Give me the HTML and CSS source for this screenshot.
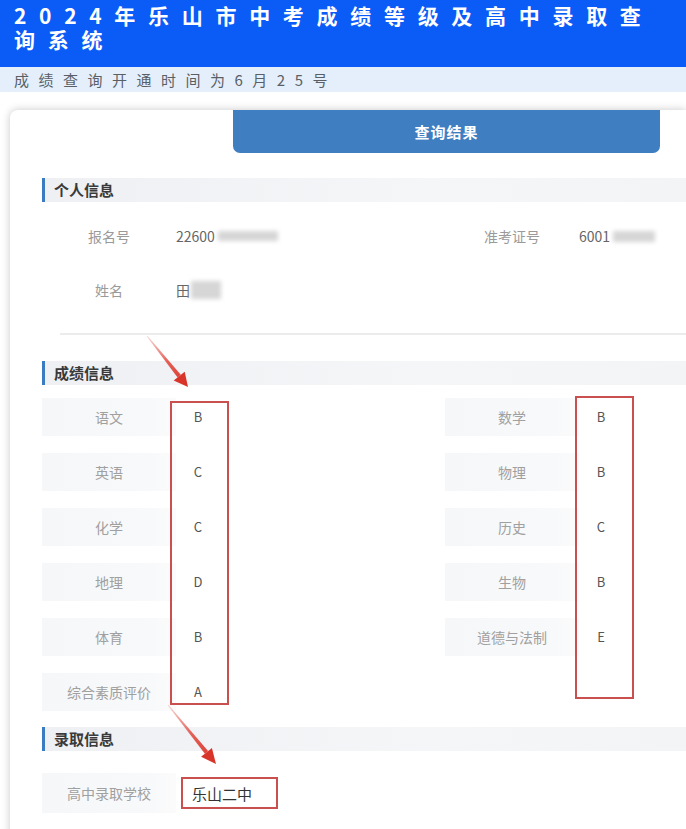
FILE: index.html
```html
<!DOCTYPE html>
<html lang="zh-CN">
<head>
    <meta charset="UTF-8">
    <meta name="viewport" content="width=device-width, initial-scale=1.0">
    <title>2024年乐山市中考成绩等级及高中录取查询系统</title>
    <link rel="stylesheet" href="styles.css">
</head>
<body>
    <div class="cabecera">
        <h1>2024年乐山市中考成绩等级及高中录取查<br>询系统</h1>
    </div>
    <div class="aviso">成绩查询开通时间为6月25号</div>

    <div class="tarjeta">
        <div class="pestana">查询结果</div>

        <div class="cuerpo">
            <h3 class="titulo">个人信息</h3>
            <div class="personal">
                <div class="fila">
                    <span class="etiqueta">报名号</span>
                    <span class="valor">22600<i class="oculto largo"></i></span>
                </div>
                <div class="fila">
                    <span class="etiqueta">准考证号</span>
                    <span class="valor">6001<i class="oculto corto"></i></span>
                </div>
                <div class="fila">
                    <span class="etiqueta">姓名</span>
                    <span class="valor">田<i class="oculto nombre"></i></span>
                </div>
            </div>
            <div class="separador"></div>

            <h3 class="titulo">成绩信息</h3>
            <div class="notas">
                <div class="nota"><span class="materia">语文</span><span class="letra">B</span></div>
                <div class="nota"><span class="materia">数学</span><span class="letra">B</span></div>
                <div class="nota"><span class="materia">英语</span><span class="letra">C</span></div>
                <div class="nota"><span class="materia">物理</span><span class="letra">B</span></div>
                <div class="nota"><span class="materia">化学</span><span class="letra">C</span></div>
                <div class="nota"><span class="materia">历史</span><span class="letra">C</span></div>
                <div class="nota"><span class="materia">地理</span><span class="letra">D</span></div>
                <div class="nota"><span class="materia">生物</span><span class="letra">B</span></div>
                <div class="nota"><span class="materia">体育</span><span class="letra">B</span></div>
                <div class="nota"><span class="materia">道德与法制</span><span class="letra">E</span></div>
                <div class="nota"><span class="materia">综合素质评价</span><span class="letra">A</span></div>

                <!-- marcas rojas hechas a mano encima de la captura -->
                <div class="marca marca-izq"></div>
                <div class="marca marca-der"></div>
            </div>

            <h3 class="titulo">录取信息</h3>
            <div class="admision">
                <span class="materia">高中录取学校</span>
                <span class="escuela">乐山二中</span>
            </div>
        </div>
    </div>

    <svg class="flechas" width="686" height="829" viewBox="0 0 686 829">
        <defs>
            <linearGradient id="cola1" x1="147" y1="336" x2="188" y2="387" gradientUnits="userSpaceOnUse">
                <stop offset="0" stop-color="#e0453a" stop-opacity="0.2"/>
                <stop offset="0.5" stop-color="#e0453a" stop-opacity="0.85"/>
                <stop offset="1" stop-color="#d9342a"/>
            </linearGradient>
            <linearGradient id="cola2" x1="168" y1="705" x2="216" y2="764" gradientUnits="userSpaceOnUse">
                <stop offset="0" stop-color="#e0453a" stop-opacity="0.2"/>
                <stop offset="0.5" stop-color="#e0453a" stop-opacity="0.85"/>
                <stop offset="1" stop-color="#d9342a"/>
            </linearGradient>
        </defs>
        <polygon points="146.6,336.3 147.4,335.7 180.8,374.8 177.6,377.4" fill="url(#cola1)"/>
        <polygon points="173.7,380.5 184.7,371.7 188,387" fill="#d9342a"/>
        <polygon points="167.6,705.3 168.4,704.7 208.1,751.1 204.9,753.7" fill="url(#cola2)"/>
        <polygon points="201.1,756.8 211.9,748.0 216,764" fill="#d9342a"/>
    </svg>
</body>
</html>
```

FILE: styles.css
```css
body {
    margin: 0;
    width: 686px;
    height: 829px;
    overflow: hidden;
    position: relative;
    background: #ffffff;
    font-family: "Noto Sans CJK SC", "Noto Sans", sans-serif;
    color: #555;
}

.cabecera {
    background-color: #0b5bf6;
    height: 67px;
    box-sizing: border-box;
    padding: 3px 14px 0 14px;
}

.cabecera h1 {
    margin: 0;
    color: #ffffff;
    font-size: 21px;
    line-height: 24px;
    font-weight: bold;
    letter-spacing: 12.7px;
    white-space: nowrap;
}

.aviso {
    background-color: #e4effb;
    height: 25px;
    line-height: 25px;
    padding-left: 14px;
    font-size: 15px;
    letter-spacing: 9.5px;
    color: #5a5f66;
}

.tarjeta {
    margin: 18px 0 0 10px;
    background: #ffffff;
    border-radius: 8px 0 0 0;
    box-shadow: 0 0 8px rgba(0, 0, 0, 0.22);
    height: 760px;
}

.pestana {
    margin-left: 223px;
    width: 427px;
    height: 43px;
    line-height: 43px;
    background-color: #3f7ec0;
    border-radius: 0 0 7px 7px;
    color: #ffffff;
    text-align: center;
    font-size: 15px;
    font-weight: bold;
    letter-spacing: 1px;
}

.cuerpo {
    padding-left: 32px;
}

.titulo {
    margin: 0;
    height: 24px;
    line-height: 24px;
    border-left: 3px solid #3a7bc1;
    padding-left: 9px;
    font-size: 15px;
    font-weight: bold;
    color: #3a3a3a;
    background: linear-gradient(90deg, #eef0f3, #f5f6f8 60%, #f3f4f6);
}

.cuerpo .titulo:first-child {
    margin-top: 25px;
}

.personal {
    display: grid;
    grid-template-columns: 403px 1fr;
    row-gap: 16px;
    margin-top: 15px;
}

.fila {
    display: flex;
    align-items: center;
    height: 38px;
}

.etiqueta {
    width: 134px;
    text-align: center;
    font-size: 14px;
    color: #9a9a9a;
}

.valor {
    display: flex;
    align-items: center;
    font-size: 14px;
    color: #666;
}

.oculto {
    display: inline-block;
    background: #d6d6d6;
    filter: blur(2px);
}

.oculto.largo {
    width: 60px;
    height: 10px;
    margin-left: 3px;
}

.oculto.corto {
    width: 42px;
    height: 11px;
    margin-left: 3px;
}

.oculto.nombre {
    width: 30px;
    height: 18px;
    margin-left: 1px;
}

.separador {
    height: 2px;
    background-color: #ececec;
    margin: 24px 0 26px 18px;
}

.notas {
    position: relative;
    display: grid;
    grid-template-columns: 403px 1fr;
    row-gap: 17px;
    margin: 13px 0 16px 0;
}

.nota {
    display: flex;
    height: 38px;
}

.materia {
    width: 134px;
    line-height: 38px;
    text-align: center;
    font-size: 14px;
    color: #a0a0a0;
    background: linear-gradient(90deg, #f6f7f8, #f8f9fa 80%, #fbfbfc);
}

.letra {
    width: 44px;
    line-height: 38px;
    text-align: center;
    font-size: 13px;
    color: #555;
}

.marca {
    position: absolute;
    border: 2px solid #c9504f;
    box-sizing: border-box;
}

.marca-izq {
    left: 128px;
    top: 3px;
    width: 59px;
    height: 304px;
}

.marca-der {
    left: 533px;
    top: -2px;
    width: 59px;
    height: 303px;
}

.admision {
    display: flex;
    align-items: center;
    margin-top: 22px;
}

.admision .materia {
    height: 40px;
    line-height: 40px;
}

.escuela {
    margin-left: 5px;
    height: 32px;
    line-height: 30px;
    box-sizing: border-box;
    border: 2px solid #c9504f;
    padding: 0 24px 0 9px;
    font-size: 15px;
    color: #333;
}

.flechas {
    position: absolute;
    top: 0;
    left: 0;
    pointer-events: none;
}
```
